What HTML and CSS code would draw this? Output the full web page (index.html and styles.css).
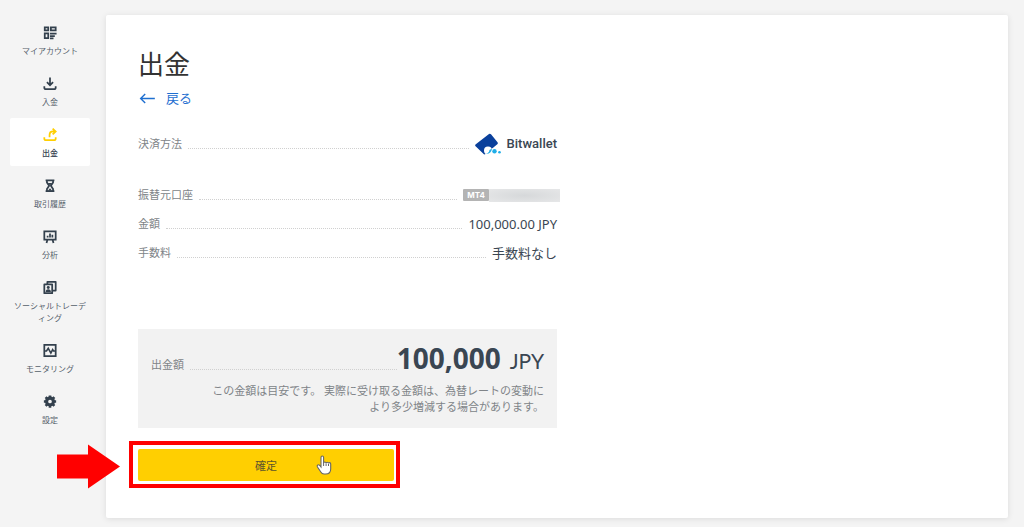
FILE: index.html
```html
<!DOCTYPE html>
<html lang="ja">
<head>
  <meta charset="utf-8">
  <title>出金</title>
  <link rel="stylesheet" href="styles.css">
</head>
<body>
  <div class="layout">
    <nav class="sidebar">
      <a class="nav-item" href="#">
        <svg class="nav-icon" viewBox="0 0 16 16" fill="none" stroke="currentColor" stroke-width="2">
          <path d="M2 2h4v3.500H2zM9 2h5.500v3.500H9zM2 9h4v5.500H2zM8 9.200h7.500M8 12h5.500M8 14.700h4"/>
        </svg>
        <span>マイアカウント</span>
      </a>
      <a class="nav-item" href="#">
        <svg class="nav-icon" viewBox="0 0 16 16" fill="none" stroke="currentColor" stroke-width="2">
          <path d="M8 1v9M4.500 6.500L8 10l3.500-3.500M1.500 11v1.500q0 2 2 2h9q2 0 2-2V11"/>
        </svg>
        <span>入金</span>
      </a>
      <a class="nav-item active" href="#">
        <svg class="nav-icon" viewBox="0 0 16 16" fill="none" stroke="currentColor" stroke-width="2">
          <path d="M7.500 11V8.500q0-4 4-4H14M11 1.200l3.500 3.300L11 7.800M1.500 11v1.500q0 2 2 2h9q2 0 2-2V11"/>
        </svg>
        <span>出金</span>
      </a>
      <a class="nav-item" href="#">
        <svg class="nav-icon" viewBox="0 0 16 16" fill="none" stroke="currentColor" stroke-width="2">
          <path d="M3 2h10M3 14.500h10M4.500 2v2.500L7 8.200 4.500 12v2.500M11.500 2v2.500L9 8.200l2.500 3.800v2.500"/>
          <path d="M5.500 5h5L8 8zM5.500 14l2.500-3 2.500 3z" fill="currentColor" stroke="none"/>
        </svg>
        <span>取引履歴</span>
      </a>
      <a class="nav-item" href="#">
        <svg class="nav-icon" viewBox="0 0 16 16" fill="none" stroke="currentColor" stroke-width="2">
          <path d="M1.500 2h13v9.500h-13zM5 12l-1 3.500M11 12l1 3.500M5.300 9V7M8 9V4.500M10.700 9V6"/>
        </svg>
        <span>分析</span>
      </a>
      <a class="nav-item" href="#">
        <svg class="nav-icon" viewBox="0 0 16 16" fill="none" stroke="currentColor" stroke-width="2">
          <path d="M1.500 4.500h9v10h-9zM5 4V1.500h9.500v10H11" stroke-linejoin="round"/>
          <circle cx="6" cy="8" r="1.700" fill="currentColor" stroke="none"/>
          <path d="M3 13q0-3 3-3t3 3z" fill="currentColor" stroke="none"/>
        </svg>
        <span>ソーシャルトレーディング</span>
      </a>
      <a class="nav-item" href="#">
        <svg class="nav-icon" viewBox="0 0 16 16" fill="none" stroke="currentColor" stroke-width="2">
          <path d="M1.500 1.500h13v13h-13z"/>
          <path d="M2 8.500h2L6 5.500l3 5.500 2-4 1 1.500h2" stroke-width="1.800"/>
        </svg>
        <span>モニタリング</span>
      </a>
      <a class="nav-item" href="#">
        <svg class="nav-icon" viewBox="0 0 16 16" fill="none" stroke="currentColor">
          <circle cx="8" cy="8" r="3.900" stroke-width="3.600"/>
          <path d="M8 1v3M8 12v3M1 8h3M12 8h3M3 3l2 2M11 11l2 2M3 13l2-2M11 5l2-2" stroke-width="3"/>
        </svg>
        <span>設定</span>
      </a>
    </nav>

    <main class="card">
      <h1>出金</h1>
      <a class="back" href="#">
        <svg class="back-icon" viewBox="0 0 18 12" fill="none" stroke="currentColor" stroke-width="1.500">
          <path d="M17 6H1.500M6.500 1l-5 5 5 5"/>
        </svg>
        <span>戻る</span>
      </a>

      <form class="withdraw">
        <dl class="details">
          <div class="row row-method">
            <dt>決済方法</dt>
            <dd class="method">
              <svg class="wallet" viewBox="0 0 26 22">
                <path d="M14 1q1-.8 2 .2l6.500 8q.8 1.100-.2 2.100L10.500 21q-1.200.9-2.100-.2L.6 13.300q-1-1 .2-2z" fill="#0a409c"/>
                <circle cx="13" cy="17.500" r="4" fill="#fff"/>
                <circle cx="19.500" cy="18.300" r="3.200" fill="#fff"/>
                <path d="M11 20.800q5 .5 6-5-3 .5-3 3-1 1.500-3 2z" fill="#20aee8"/>
                <circle cx="19.500" cy="18.300" r="2.200" fill="#20aee8"/>
                <circle cx="24.500" cy="19.300" r="1.300" fill="#20aee8"/>
              </svg>
              <span>Bitwallet</span>
            </dd>
          </div>
          <div class="row">
            <dt>振替元口座</dt>
            <dd class="account"><span class="tag">MT4</span><span class="masked"></span></dd>
          </div>
          <div class="row">
            <dt>金額</dt>
            <dd>100,000.00 JPY</dd>
          </div>
          <div class="row">
            <dt>手数料</dt>
            <dd>手数料なし</dd>
          </div>
        </dl>

        <div class="total">
          <div class="total-row">
            <span class="total-label">出金額</span>
            <span class="amount">100,000</span>
            <span class="currency">JPY</span>
          </div>
          <p class="note">この金額は目安です。 実際に受け取る金額は、為替レートの変動により多少増減する場合があります。</p>
        </div>

        <div class="submit">
          <button type="button">確定</button>
          <div class="frame"></div>
          <svg class="arrow" viewBox="0 0 63 44">
            <path d="M0 10h31V0l32 22-32 22V34H0z" fill="#ff0000"/>
          </svg>
          <svg class="pointer" viewBox="0 0 16 20">
            <path d="M5 12V2.500q0-1.500 1.300-1.500t1.300 1.500V8q0-1 1.200-1t1.300 1.300q0-1 1.200-1t1.200 1.300q0-1 1.100-1t1.100 1.400V14q0 5-5 5H8q-2 0-3.200-2L1.500 12q-.8-1.500.4-2.100 1-.4 2 .8z" fill="#fff" stroke="#666" stroke-width="1.100"/>
            <path d="M7.600 8v3M10.100 8.500V11M12.500 9v2" stroke="#666"/>
          </svg>
        </div>
      </form>
    </main>
  </div>
</body>
</html>
```

FILE: styles.css
```css
* {
  box-sizing: border-box;
}

body {
  margin: 0;
  background-color: #f4f4f4;
  color: #3a4652;
  font-family: "Noto Sans", "Noto Sans CJK JP", sans-serif;
  font-size: 12px;
}

.layout {
  display: flex;
  min-height: 100vh;
  padding: 15px 16px 9px 10px;
  gap: 16px;
}

.sidebar {
  display: flex;
  flex-direction: column;
  gap: 3px;
  width: 80px;
  padding-top: 1px;
  flex-shrink: 0;
}

.nav-item {
  display: flex;
  flex-direction: column;
  align-items: center;
  gap: 5px;
  padding: 9px 3px 7px;
  border-radius: 2px;
  color: #33404d;
  font-family: "Noto Sans CJK JP", sans-serif;
  font-size: 8px;
  line-height: 12px;
  text-align: center;
  text-decoration: none;
}

.nav-item span {
  color: #55606a;
  word-break: break-all;
}

.nav-icon {
  width: 14px;
  height: 15px;
}

.nav-item.active {
  background-color: #fff;
  color: #ffcf01;
}

.nav-item.active span {
  color: #33404d;
  font-weight: 500;
}

.card {
  flex: 1;
  padding: 28px 32px 36px;
  background-color: #fff;
  border-radius: 2px;
  box-shadow: 0 1px 6px rgba(0, 0, 0, 0.1);
}

h1 {
  margin: 0;
  color: #333;
  font-family: "Noto Sans CJK JP", sans-serif;
  font-size: 26px;
  font-weight: 400;
  line-height: 39px;
}

.back {
  display: inline-flex;
  align-items: center;
  gap: 10px;
  margin-left: 1px;
  color: #1f6fd0;
  font-size: 13px;
  line-height: 32px;
  text-decoration: none;
}

.back-icon {
  width: 17px;
  height: 11px;
}

.withdraw {
  width: 50%;
  max-width: 419px;
}

.details {
  display: flex;
  flex-direction: column;
  gap: 5px;
  margin: 18px 0 64px;
}

.row {
  display: flex;
  align-items: center;
  line-height: 24px;
}

.row-method {
  margin-bottom: 22px;
}

.row dt,
.total-label {
  display: flex;
  flex: 1;
  align-items: center;
  color: #808488;
  font-size: 11px;
}

.row dt::after,
.total-label::after {
  content: "";
  flex: 1;
  height: 8px;
  margin-left: 6px;
  border-bottom: 1px dotted #d0d0d0;
}

.row dd {
  margin: 0;
  padding-left: 6px;
  font-size: 13px;
}

.row .method {
  display: flex;
  align-items: center;
  gap: 6px;
  font-family: Roboto, sans-serif;
  font-weight: 500;
}

.wallet {
  width: 26px;
  height: 22px;
}

.row .account {
  display: flex;
  align-items: center;
  margin-right: -3px;
}

.tag {
  padding: 0 4px;
  border-radius: 1px;
  background-color: #b4b4b4;
  color: #fff;
  font-family: Inter, sans-serif;
  font-size: 8px;
  font-weight: 700;
  line-height: 12px;
}

.masked {
  width: 71px;
  height: 13px;
  background: radial-gradient(ellipse, #d6d8da, #e6e7e8);
}

.total {
  padding: 11px 13px 13px;
  background-color: #f2f2f2;
}

.total-row {
  display: flex;
  align-items: baseline;
  height: 36px;
  line-height: 36px;
}

.total-label,
.currency {
  line-height: 24px;
}

.amount {
  font-size: 28px;
  font-weight: 700;
}

.currency {
  margin-left: 9px;
  font-family: Lato, sans-serif;
  font-size: 21px;
}

.note {
  margin: 7px 0 0;
  padding-left: 54px;
  color: #808488;
  font-size: 11px;
  line-height: 16px;
  text-align: right;
}

.submit {
  position: relative;
  width: 256px;
  margin-top: 21px;
}

button {
  display: block;
  width: 100%;
  height: 32px;
  padding: 0;
  border: none;
  border-radius: 2px;
  background-color: #ffcf01;
  color: #5c552c;
  font-family: "Noto Sans CJK JP", sans-serif;
  font-size: 11px;
  cursor: pointer;
}

.frame {
  position: absolute;
  inset: -8px -6px -7px -9px;
  border: 4px solid #ff0000;
  pointer-events: none;
}

.arrow {
  position: absolute;
  top: -5px;
  left: -81px;
  width: 63px;
  height: 45px;
}

.pointer {
  position: absolute;
  top: 6px;
  left: 178px;
  width: 16px;
  height: 20px;
  pointer-events: none;
}
```
